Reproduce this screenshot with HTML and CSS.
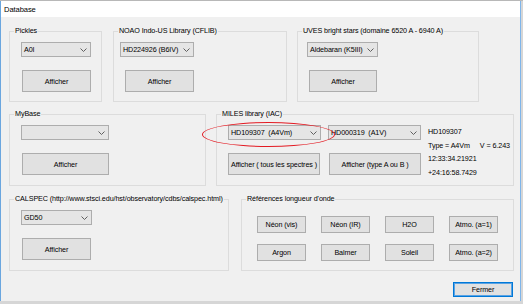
FILE: index.html
```html
<!DOCTYPE html>
<html lang="fr">
<head>
    <meta charset="UTF-8">
    <title>Database</title>
    <link rel="stylesheet" href="styles.css">
</head>
<body>
    <div class="topbar"></div>
    <div class="window">
        <div class="titlebar">Database</div>
        <div class="client">
            <div class="row">
                <fieldset class="group w-pickles">
                    <legend>Pickles</legend>
                    <div class="gbody pad-11">
                        <div class="combo c70">A0I<svg class="chev" viewBox="0 0 7 4"><path d="M0.5 0.5 L3.5 3.5 L6.5 0.5"/></svg></div>
                        <button class="btn b69 ml1">Afficher</button>
                    </div>
                </fieldset>
                <fieldset class="group w-noao">
                    <legend>NOAO Indo-US Library (CFLIB)</legend>
                    <div class="gbody pad-6">
                        <div class="combo c74">HD224926 (B6IV)<svg class="chev" viewBox="0 0 7 4"><path d="M0.5 0.5 L3.5 3.5 L6.5 0.5"/></svg></div>
                        <button class="btn b69 ml5">Afficher</button>
                    </div>
                </fieldset>
                <fieldset class="group w-uves">
                    <legend>UVES bright stars (domaine 6520 A - 6940 A)</legend>
                    <div class="gbody pad-9">
                        <div class="combo c71">Aldebaran (K5III)<svg class="chev" viewBox="0 0 7 4"><path d="M0.5 0.5 L3.5 3.5 L6.5 0.5"/></svg></div>
                        <button class="btn b68 ml2">Afficher</button>
                    </div>
                </fieldset>
            </div>

            <div class="row row-2">
                <fieldset class="group w-mybase">
                    <legend>MyBase</legend>
                    <div class="gbody pad-11">
                        <div class="combo c88"><svg class="chev" viewBox="0 0 7 4"><path d="M0.5 0.5 L3.5 3.5 L6.5 0.5"/></svg></div>
                        <button class="btn b87 ml1">Afficher</button>
                    </div>
                </fieldset>
                <fieldset class="group w-miles">
                    <legend>MILES library (IAC)</legend>
                    <div class="gbody pad-11 miles">
                        <div class="miles-controls">
                            <div class="pair">
                                <div class="combo c93">HD109307 &nbsp;(A4Vm)<svg class="chev" viewBox="0 0 7 4"><path d="M0.5 0.5 L3.5 3.5 L6.5 0.5"/></svg></div>
                                <div class="combo c93">HD000319 &nbsp;(A1V)<svg class="chev" viewBox="0 0 7 4"><path d="M0.5 0.5 L3.5 3.5 L6.5 0.5"/></svg></div>
                            </div>
                            <div class="pair pair-btns">
                                <button class="btn b92">Afficher ( tous les spectres )</button>
                                <button class="btn b92">Afficher (type A ou B )</button>
                            </div>
                        </div>
                        <div class="info">
                            <div>HD109307</div>
                            <div>Type = A4Vm<span class="vmag">V = 6.243</span></div>
                            <div>12:33:34.21921</div>
                            <div>+24:16:58.7429</div>
                        </div>
                    </div>
                </fieldset>
            </div>

            <div class="row row-3">
                <fieldset class="group w-calspec">
                    <legend>CALSPEC (http://www.stsci.edu/hst/observatory/cdbs/calspec.html)</legend>
                    <div class="gbody pad-11">
                        <div class="combo c71">GD50<svg class="chev" viewBox="0 0 7 4"><path d="M0.5 0.5 L3.5 3.5 L6.5 0.5"/></svg></div>
                        <button class="btn b69 ml1">Afficher</button>
                    </div>
                </fieldset>
                <fieldset class="group w-refs">
                    <legend>Références longueur d'onde</legend>
                    <div class="gbody refs">
                        <button class="btn">Néon (vis)</button>
                        <button class="btn">Néon (IR)</button>
                        <button class="btn">H2O</button>
                        <button class="btn">Atmo. (a=1)</button>
                        <button class="btn">Argon</button>
                        <button class="btn">Balmer</button>
                        <button class="btn">Soleil</button>
                        <button class="btn">Atmo. (a=2)</button>
                    </div>
                </fieldset>
            </div>

            <div class="footer">
                <button class="btn btn-default">Fermer</button>
            </div>

            <span class="mark"></span>
        </div>
    </div>
</body>
</html>
```

FILE: styles.css
```css
body {
    margin: 0;
    width: 523px;
    height: 304px;
    overflow: hidden;
    background: #d6d6d6;
    font-family: "Liberation Sans", Arial, sans-serif;
    font-size: 7.2px;
    letter-spacing: -0.1px;
    color: #000;
}
.topbar {
    height: 1px;
    background: #b8b8b8;
}
.window {
    width: 519px;
    height: 300px;
    border-left: 1px solid #6aa6df;
    border-right: 1px solid #7fb5ea;
    background: #f0f0f0;
    display: flex;
    flex-direction: column;
}
.titlebar {
    height: 16px;
    line-height: 17px;
    padding-left: 3px;
    background: #fff;
    font-size: 7.6px;
}
.client {
    flex: 1;
    position: relative;
    padding: 9px 0 0 8px;
}

/* group boxes */
.row {
    display: flex;
    align-items: flex-start;
}
.row-2 {
    margin-top: 7px;
}
.row-3 {
    margin-top: 8px;
}
.group {
    box-sizing: border-box;
    margin: 0;
    padding: 0;
    min-width: 0;
    height: 76px;
    border: 1px solid #dcdcdc;
}
.row-2 .group,
.row-3 .group {
    height: 77px;
}
.group legend {
    margin-left: 4px;
    padding: 0 1px;
    line-height: 10px;
    white-space: nowrap;
}
.w-pickles { width: 93px; }
.w-noao { width: 174px; margin-left: 11px; }
.w-uves { width: 182px; margin-left: 10px; }
.w-mybase { width: 197px; }
.w-miles { width: 298px; margin-left: 10px; }
.w-calspec { width: 220px; }
.w-refs { width: 273px; margin-left: 12px; }

.gbody {
    display: flex;
    flex-direction: column;
    align-items: flex-start;
    padding-top: 6px;
}
.pad-6 { padding-left: 6px; }
.pad-9 { padding-left: 9px; }
.pad-11 { padding-left: 11px; }

/* controls */
.combo {
    box-sizing: border-box;
    height: 15px;
    padding: 0 3px 0 2px;
    border: 1px solid #adadad;
    background: #e5e5e5;
    display: flex;
    align-items: center;
    white-space: nowrap;
}
.chev {
    width: 7px;
    height: 4px;
    margin-left: auto;
    flex: none;
}
.chev path {
    fill: none;
    stroke: #606060;
    stroke-width: 1;
}
.c70 { width: 70px; }
.c71 { width: 71px; }
.c74 { width: 74px; }
.c88 { width: 88px; }
.c93 { width: 93px; }

.btn {
    box-sizing: border-box;
    height: 22px;
    margin: 13px 0 0 0;
    padding: 0;
    border: 1px solid #adadad;
    background: #e1e1e1;
    font: inherit;
    letter-spacing: inherit;
    color: #000;
    white-space: nowrap;
}
.b68 { width: 68px; }
.b69 { width: 69px; }
.b87 { width: 87px; }
.b92 { width: 92px; }
.ml1 { margin-left: 1px; }
.ml2 { margin-left: 2px; }
.ml5 { margin-left: 5px; }

/* MILES */
.miles {
    flex-direction: row;
}
.pair {
    display: flex;
    gap: 7px;
}
.pair-btns {
    gap: 9px;
}
.info {
    margin-left: 7px;
    line-height: 13.6px;
    white-space: nowrap;
}
.vmag {
    margin-left: 10px;
}

/* wavelength references */
.refs {
    display: grid;
    grid-template-columns: repeat(4, 49px);
    column-gap: 15px;
    row-gap: 11px;
    padding: 12px 0 0 15px;
}
.refs .btn {
    height: 17px;
    margin: 0;
    width: 49px;
}

.footer {
    display: flex;
    justify-content: flex-end;
    padding-right: 7px;
    margin-top: 11px;
}
.footer .btn {
    margin: 0;
    width: 60px;
    height: 15px;
}
.btn-default {
    border-color: #0078d7;
    box-shadow: inset 0 0 0 1px #5aa3e4;
}

/* red annotation ellipse */
.mark {
    position: absolute;
    left: 201px;
    top: 105px;
    width: 133px;
    height: 25px;
    box-sizing: border-box;
    border: 1.5px solid #e31b23;
    border-radius: 50%;
}
```
